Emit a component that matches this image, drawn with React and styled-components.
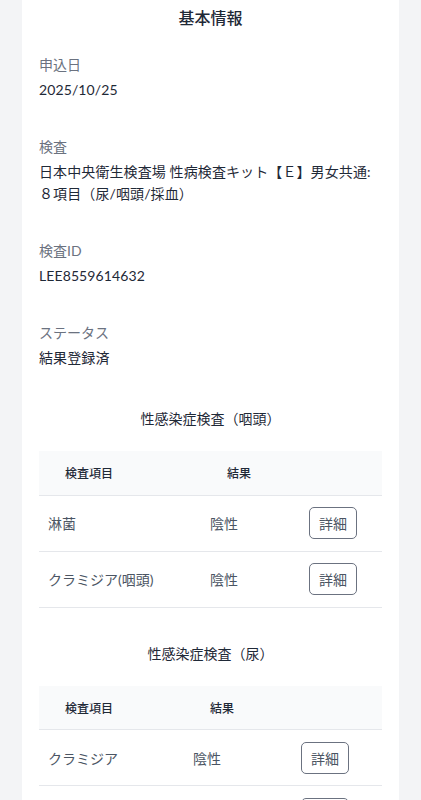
import React from 'react';
import styled, { createGlobalStyle } from 'styled-components';

const fields = [
  { label: '申込日', value: '2025/10/25' },
  { label: '検査', value: '日本中央衛生検査場 性病検査キット【Ｅ】男女共通:８項目（尿/咽頭/採血）' },
  { label: '検査ID', value: 'LEE8559614632' },
  { label: 'ステータス', value: '結果登録済' },
];

const sections = [
  {
    title: '性感染症検査（咽頭）',
    cols: [162, 99, 82],
    rows: [
      { name: '淋菌', result: '陰性' },
      { name: 'クラミジア(咽頭)', result: '陰性' },
    ],
  },
  {
    title: '性感染症検査（尿）',
    cols: [145, 108, 90],
    rows: [
      { name: 'クラミジア', result: '陰性' },
      { name: '淋菌', result: '陰性' },
      { name: 'トリコモナス', result: '陰性' },
    ],
  },
];

function App() {
  return (
    <Page>
      <GlobalStyle />
      <Card>
        <CardTitle>基本情報</CardTitle>
        <FieldList>
          {fields.map((f) => (
            <Field key={f.label}>
              <Label>{f.label}</Label>
              <Value>{f.value}</Value>
            </Field>
          ))}
        </FieldList>
        {sections.map((s) => (
          <Section key={s.title}>
            <SectionTitle>{s.title}</SectionTitle>
            <Table>
              <colgroup>
                {s.cols.map((w, i) => (
                  <col key={i} style={{ width: w }} />
                ))}
              </colgroup>
              <thead>
                <tr>
                  <Th>検査項目</Th>
                  <Th>結果</Th>
                  <Th />
                </tr>
              </thead>
              <tbody>
                {s.rows.map((r) => (
                  <tr key={r.name}>
                    <Td>{r.name}</Td>
                    <Td>{r.result}</Td>
                    <Td>
                      <DetailButton>詳細</DetailButton>
                    </Td>
                  </tr>
                ))}
              </tbody>
            </Table>
          </Section>
        ))}
      </Card>
    </Page>
  );
}

const GlobalStyle = createGlobalStyle`
  body {
    margin: 0;
    background: #f3f4f6;
    font-family: Lato, "Noto Sans CJK JP", sans-serif;
    -webkit-font-smoothing: antialiased;
  }
`;

const Page = styled.div`
  padding: 0 22px;
`;

const Card = styled.div`
  background: #ffffff;
  padding: 6px 17px 40px;
`;

const CardTitle = styled.h2`
  margin: 0 0 25px;
  font-size: 16px;
  line-height: 24px;
  font-weight: 500;
  color: #1f2937;
  text-align: center;
`;

const FieldList = styled.div`
  display: flex;
  flex-direction: column;
  gap: 36px;
  margin-bottom: 39px;
`;

const Field = styled.div`
  display: flex;
  flex-direction: column;
  gap: 4px;
`;

const Label = styled.div`
  font-size: 14px;
  line-height: 20px;
  color: #6b7280;
`;

const Value = styled.div`
  font-size: 14px;
  line-height: 22px;
  color: #1f2937;
  letter-spacing: 0.1px;
`;

const Section = styled.section`
  & + & {
    margin-top: 35px;
  }
`;

const SectionTitle = styled.h3`
  margin: 0 0 21px;
  font-size: 14px;
  line-height: 22px;
  font-weight: 400;
  color: #1f2937;
  text-align: center;
`;

const Table = styled.table`
  width: 100%;
  border-collapse: collapse;
  table-layout: fixed;

  thead tr {
    background: #f9fafb;
    height: 44px;
    border-bottom: 1px solid #e5e7eb;
  }

  tbody tr {
    height: 56px;
    border-bottom: 1px solid #e5e7eb;
  }
`;

const Th = styled.th`
  padding: 0 24px 0 26px;
  text-align: left;
  font-size: 12px;
  font-weight: 500;
  color: #1f2937;
  white-space: nowrap;
`;

const Td = styled.td`
  padding: 0 8px 0 9px;
  font-size: 14px;
  color: #4b5563;
  white-space: nowrap;
  vertical-align: middle;
`;

const DetailButton = styled.button`
  height: 32px;
  padding: 0 9px;
  border: 1px solid #6b7280;
  border-radius: 5px;
  background: #ffffff;
  font-family: inherit;
  font-size: 14px;
  color: #4b5563;
`;

export default App;
